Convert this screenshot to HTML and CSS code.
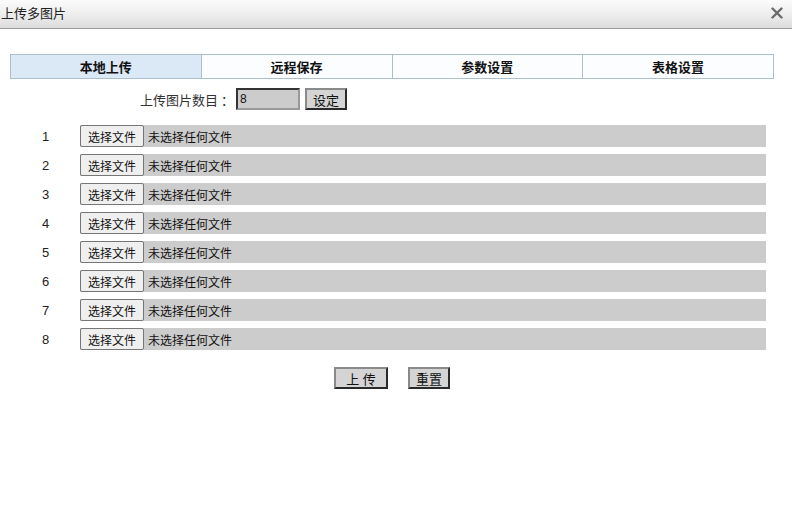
FILE: index.html
```html
<!DOCTYPE html>
<html lang="zh-CN">
<head>
<meta charset="utf-8">
<title>上传多图片</title>
<link rel="stylesheet" href="styles.css">
</head>
<body>
<div class="dialog">
  <div class="titlebar">
    <span class="title">上传多图片</span>
    <span class="close">
      <svg width="12" height="12" viewBox="0 0 12 12"><path d="M1.5 1.5 L10.5 10.5 M10.5 1.5 L1.5 10.5" stroke="#6a6a6a" stroke-width="2.4" stroke-linecap="round"/></svg>
    </span>
  </div>
  <div class="content">
    <div class="tabs">
      <div class="tab active">本地上传</div>
      <div class="tab">远程保存</div>
      <div class="tab">参数设置</div>
      <div class="tab">表格设置</div>
    </div>
    <div class="count-row">
      <span class="count-label">上传图片数目<span class="colon">：</span></span>
      <span class="count-input">8</span>
      <span class="btn btn-set">设定</span>
    </div>
    <div class="files">
      <div class="file-row"><span class="num">1</span><span class="file"><span class="file-btn">选择文件</span><span class="file-text">未选择任何文件</span></span></div>
      <div class="file-row"><span class="num">2</span><span class="file"><span class="file-btn">选择文件</span><span class="file-text">未选择任何文件</span></span></div>
      <div class="file-row"><span class="num">3</span><span class="file"><span class="file-btn">选择文件</span><span class="file-text">未选择任何文件</span></span></div>
      <div class="file-row"><span class="num">4</span><span class="file"><span class="file-btn">选择文件</span><span class="file-text">未选择任何文件</span></span></div>
      <div class="file-row"><span class="num">5</span><span class="file"><span class="file-btn">选择文件</span><span class="file-text">未选择任何文件</span></span></div>
      <div class="file-row"><span class="num">6</span><span class="file"><span class="file-btn">选择文件</span><span class="file-text">未选择任何文件</span></span></div>
      <div class="file-row"><span class="num">7</span><span class="file"><span class="file-btn">选择文件</span><span class="file-text">未选择任何文件</span></span></div>
      <div class="file-row"><span class="num">8</span><span class="file"><span class="file-btn">选择文件</span><span class="file-text">未选择任何文件</span></span></div>
    </div>
    <div class="actions">
      <span class="btn btn-upload">上 传</span>
      <span class="btn btn-reset">重置</span>
    </div>
  </div>
</div>
</body>
</html>
```

FILE: styles.css
```css
* { box-sizing: border-box; }
html, body {
  margin: 0;
  padding: 0;
  background: #fff;
}
body {
  width: 792px;
  height: 522px;
  overflow: hidden;
  font-family: "Liberation Sans", "Noto Sans CJK SC", sans-serif;
  font-size: 12px;
  color: #222;
}
.titlebar {
  height: 29px;
  border-bottom: 1px solid #9a9a9a;
  background: linear-gradient(to bottom, #fbfbfb 0%, #eeeeee 50%, #dcdcdc 100%);
  display: flex;
  align-items: center;
  justify-content: space-between;
  padding: 0 9px 0 1px;
}
.title {
  font-size: 13px;
  color: #222;
  line-height: 16px;
  margin-top: -1px;
}
.close {
  display: flex;
  align-items: center;
  margin-top: -2px;
}
.content {
  padding: 25px 0 0 10px;
}
.tabs {
  display: flex;
  width: 764px;
  height: 25px;
  border: 1px solid #aac0d0;
  background: #fbfdff;
}
.tab {
  flex: 1;
  display: flex;
  align-items: center;
  justify-content: center;
  font-weight: bold;
  font-size: 13px;
  color: #111;
  border-left: 1px solid #aac0d0;
}
.tab:first-child { border-left: none; }
.tab.active { background: #dbe8f6; }
.count-row {
  display: flex;
  align-items: center;
  height: 22px;
  margin-top: 9px;
  padding-left: 130px;
}
.count-label {
  width: 96px;
  font-family: "Noto Sans CJK SC", sans-serif;
  font-size: 13px;
  color: #333;
  white-space: nowrap;
}
.colon {
  display: inline-block;
  margin-left: 3px;
}
.count-input {
  width: 64px;
  height: 22px;
  background: #cccccc;
  border: 2px solid;
  border-color: #333 #999 #999 #333;
  font-size: 12px;
  line-height: 18px;
  padding-left: 2px;
  color: #111;
}
.btn {
  display: inline-flex;
  align-items: center;
  justify-content: center;
  height: 22px;
  background: #d4d4d4;
  border: 2px solid;
  border-color: #8a8a8a #2a2a2a #2a2a2a #8a8a8a;
  font-size: 13px;
  color: #111;
}
.btn-set {
  width: 42px;
  margin-left: 5px;
}
.files {
  margin-top: 15px;
  display: flex;
  flex-direction: column;
  gap: 7px;
}
.file-row {
  display: flex;
  align-items: center;
  height: 22px;
}
.num {
  width: 70px;
  padding-left: 32px;
  font-size: 13px;
  color: #222;
}
.file {
  display: flex;
  align-items: center;
  width: 686px;
  height: 22px;
  background: #cccccc;
}
.file-btn {
  display: inline-flex;
  align-items: center;
  justify-content: center;
  width: 64px;
  height: 22px;
  background: #efefef;
  border: 1px solid #767676;
  border-radius: 2px;
  font-size: 12px;
  color: #111;
}
.file-text {
  margin-left: 4px;
  font-size: 12px;
  color: #111;
}
.actions {
  display: flex;
  gap: 20px;
  margin-top: 17px;
  padding-left: 324px;
}
.btn-upload { width: 54px; }
.btn-reset { width: 42px; }
```
